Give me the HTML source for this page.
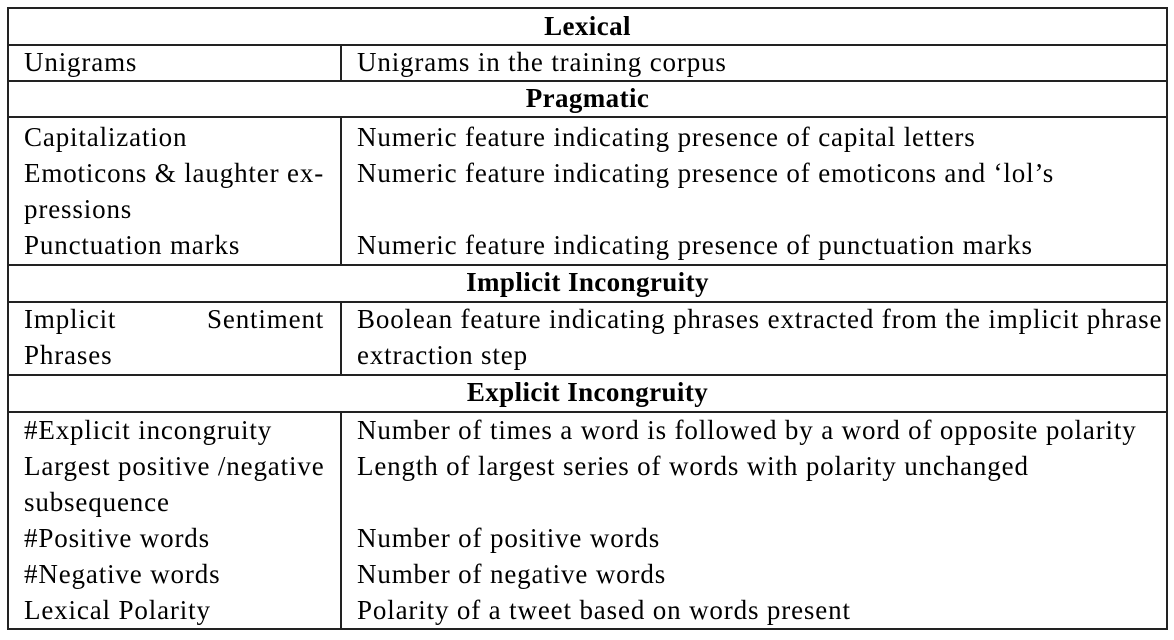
<!DOCTYPE html>
<html><head><style>
body{margin:0;width:1174px;height:640px;background:#fff;position:relative;font-family:"Liberation Serif",serif;font-size:27px;letter-spacing:0.85px;color:#000;overflow:hidden}
.h{position:absolute;left:7px;width:1161px;height:2px;background:#222}
.v{position:absolute;width:2px;background:#222}
.t{position:absolute;line-height:36px;white-space:nowrap}
.c{position:absolute;left:7px;width:1161px;text-align:center;font-weight:bold;line-height:36px;letter-spacing:0.4px}
</style></head><body>
<div class="h" style="top:7px"></div>
<div class="h" style="top:44px"></div>
<div class="h" style="top:80px"></div>
<div class="h" style="top:116px"></div>
<div class="h" style="top:264px"></div>
<div class="h" style="top:301px"></div>
<div class="h" style="top:374px"></div>
<div class="h" style="top:411px"></div>
<div class="h" style="top:628px"></div>
<div class="v" style="left:7px;top:7px;height:623px"></div>
<div class="v" style="left:1166px;top:7px;height:623px"></div>
<div class="v" style="left:340px;top:44px;height:38px"></div>
<div class="v" style="left:340px;top:116px;height:150px"></div>
<div class="v" style="left:340px;top:301px;height:75px"></div>
<div class="v" style="left:340px;top:411px;height:219px"></div>

<div class="c" style="top:8px">Lexical</div>
<div class="t" style="left:24px;top:44px">Unigrams</div>
<div class="t" style="left:357px;top:44px">Unigrams in the training corpus</div>
<div class="c" style="top:80px">Pragmatic</div>

<div class="t" style="left:24px;top:119px">Capitalization</div>
<div class="t" style="left:357px;top:119px">Numeric feature indicating presence of capital letters</div>
<div class="t" style="left:24px;top:155px">Emoticons &amp; laughter ex-</div>
<div class="t" style="left:357px;top:155px">Numeric feature indicating presence of emoticons and ‘lol’s</div>
<div class="t" style="left:24px;top:191px">pressions</div>
<div class="t" style="left:24px;top:227px">Punctuation marks</div>
<div class="t" style="left:357px;top:227px">Numeric feature indicating presence of punctuation marks</div>

<div class="c" style="top:264px">Implicit Incongruity</div>
<div class="t" style="left:24px;top:301px">Implicit</div>
<div class="t" style="left:207px;top:301px">Sentiment</div>
<div class="t" style="left:357px;top:301px">Boolean feature indicating phrases extracted from the implicit phrase</div>
<div class="t" style="left:24px;top:337px">Phrases</div>
<div class="t" style="left:357px;top:337px">extraction step</div>

<div class="c" style="top:374px">Explicit Incongruity</div>
<div class="t" style="left:24px;top:412px">#Explicit incongruity</div>
<div class="t" style="left:357px;top:412px">Number of times a word is followed by a word of opposite polarity</div>
<div class="t" style="left:24px;top:448px">Largest positive /negative</div>
<div class="t" style="left:357px;top:448px">Length of largest series of words with polarity unchanged</div>
<div class="t" style="left:24px;top:484px">subsequence</div>
<div class="t" style="left:24px;top:520px">#Positive words</div>
<div class="t" style="left:357px;top:520px">Number of positive words</div>
<div class="t" style="left:24px;top:556px">#Negative words</div>
<div class="t" style="left:357px;top:556px">Number of negative words</div>
<div class="t" style="left:24px;top:592px">Lexical Polarity</div>
<div class="t" style="left:357px;top:592px">Polarity of a tweet based on words present</div>
</body></html>
